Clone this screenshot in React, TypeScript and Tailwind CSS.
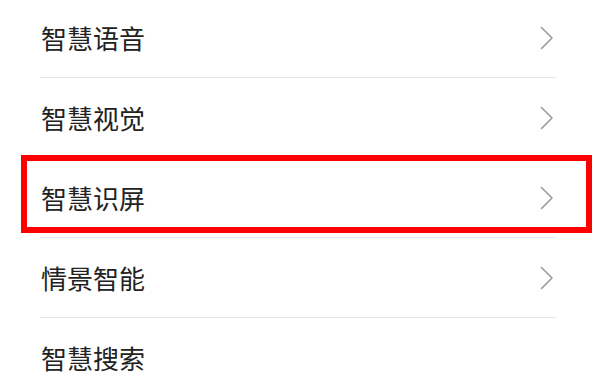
import { ChevronRight } from 'lucide-react'

const items = ['智慧语音', '智慧视觉', '智慧识屏', '情景智能', '智慧搜索']

export default function App() {
  return (
    <div className="relative w-[600px] h-[383px] overflow-hidden bg-white font-['Noto_Sans_CJK_SC',sans-serif]">
      <div className="flex flex-col pl-[40px] pr-[44px] -mt-[2px]">
        {items.map((label, i) => (
          <div
            key={label}
            className={`flex items-center justify-between h-[80px] ${i < items.length - 1 ? 'border-b border-[#e6e6e6]' : ''}`}
          >
            <span className="text-[26px] leading-none text-[#222222] pl-[1px]">{label}</span>
            {i < items.length - 1 && (
              <svg width="14" height="24" viewBox="0 0 14 24" className="mr-[2px]">
                <path d="M1.5 1.5 L12 12 L1.5 22.5" fill="none" stroke="#9a9a9a" strokeWidth="1.6" strokeLinecap="round" strokeLinejoin="round" />
              </svg>
            )}
          </div>
        ))}
      </div>
      {/* highlight box */}
      <div className="absolute left-[21px] top-[155px] w-[571px] h-[78px] border-[6px] border-[#ff0000]" />
    </div>
  )
}
